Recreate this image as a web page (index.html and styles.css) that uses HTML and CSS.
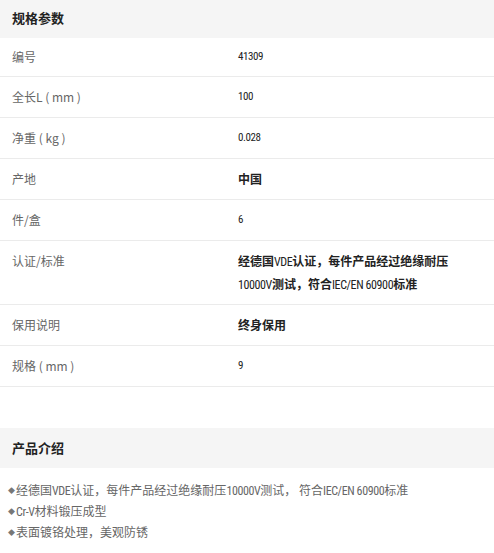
FILE: index.html
```
<!DOCTYPE html>
<html lang="zh-CN">
<head>
<meta charset="utf-8">
<title>规格参数</title>
<link rel="stylesheet" href="styles.css">
</head>
<body>
<section class="section">
  <h2 class="section-title">规格参数</h2>
  <div class="spec-table">
    <div class="row first"><div class="label">编号</div><div class="value num">41309</div></div>
    <div class="row"><div class="label">全长L ( mm )</div><div class="value num">100</div></div>
    <div class="row"><div class="label">净重 ( kg )</div><div class="value num">0.028</div></div>
    <div class="row"><div class="label">产地</div><div class="value bold">中国</div></div>
    <div class="row"><div class="label">件/盒</div><div class="value num">6</div></div>
    <div class="row tall"><div class="label">认证/标准</div><div class="value bold">经德国<span class="lat">VDE</span>认证，每件产品经过绝缘耐压<br><span class="lat">10000V</span>测试，符合<span class="lat">IEC/EN 60900</span>标准</div></div>
    <div class="row"><div class="label">保用说明</div><div class="value bold">终身保用</div></div>
    <div class="row"><div class="label">规格 ( mm )</div><div class="value num">9</div></div>
  </div>
</section>
<section class="section intro">
  <h2 class="section-title">产品介绍</h2>
  <ul class="intro-list">
    <li>经德国<span class="lat">VDE</span>认证，每件产品经过绝缘耐压<span class="lat">10000V</span>测试， 符合<span class="lat">IEC/EN 60900</span>标准</li>
    <li><span class="lat">Cr-V</span>材料锻压成型</li>
    <li>表面镀铬处理，美观防锈</li>
  </ul>
</section>
</body>
</html>
```
FILE: styles.css
```
html, body {
  margin: 0;
  padding: 0;
  background: #fff;
}
body {
  font-family: "Noto Sans CJK SC", "Liberation Sans", sans-serif;
  font-size: 12px;
  color: #333;
}
.section-title {
  margin: 0;
  background: #f5f5f5;
  height: 38px;
  line-height: 36px;
  padding: 0 12px;
  font-size: 13px;
  font-weight: bold;
  color: #222;
}
.spec-table {
  display: flex;
  flex-direction: column;
}
.row {
  display: flex;
  align-items: flex-start;
  box-sizing: border-box;
  height: 41px;
  overflow: hidden;
  border-bottom: 1px solid #ebebeb;
  padding-top: 8px;
  line-height: 23px;
}
.row.first {
  height: 39px;
  padding-top: 7px;
}
.row.tall {
  height: 64px;
}
.label {
  width: 238px;
  padding-left: 12px;
  box-sizing: border-box;
  color: #666;
  flex-shrink: 0;
  height: 23px;
}
.value {
  color: #222;
  flex: 1;
}
.num, .lat {
  font-family: "Liberation Sans Narrow", "Roboto Condensed", "Liberation Sans", sans-serif;
  font-stretch: condensed;
  letter-spacing: -0.4px;
}
.lat {
  line-height: 0;
}
.num {
  font-size: 11px;
  height: 23px;
}
.bold {
  font-weight: bold;
}
.bold .lat {
  font-weight: normal;
}
.intro {
  margin-top: 41px;
}
.intro .section-title {
  height: 40px;
  line-height: 40px;
}
.intro-list {
  list-style: none;
  margin: 0;
  padding: 11px 0 0 8px;
  color: #666;
}
.intro-list li {
  height: 21px;
  line-height: 21px;
  white-space: nowrap;
}
.intro-list li::before {
  content: "◆";
  font-size: 7px;
  line-height: 0;
  color: #777;
  vertical-align: 2px;
  margin-right: 1px;
}
```
